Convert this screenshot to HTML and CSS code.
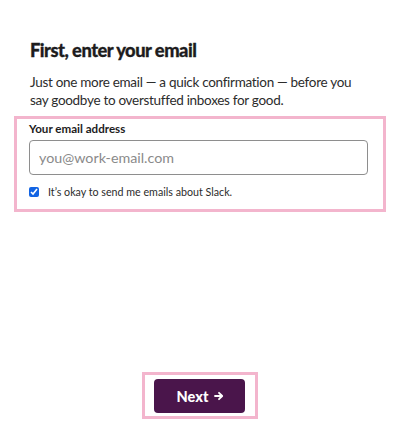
FILE: index.html
```html
<!DOCTYPE html>
<html>
<head>
<meta charset="utf-8">
<link rel="stylesheet" href="styles.css">
</head>
<body>
<main class="page">
  <h1 class="title">First, enter your email</h1>
  <p class="lead">Just one more email — a quick confirmation — before you say goodbye to overstuffed inboxes for good.</p>
  <section class="highlight form-box">
    <label class="label" for="email">Your email address</label>
    <input class="email" id="email" type="email" placeholder="you@work-email.com">
    <label class="consent">
      <input class="check" type="checkbox" checked>
      <span>It’s okay to send me emails about Slack.</span>
    </label>
  </section>
  <div class="actions">
    <div class="highlight btn-box">
      <button class="next" type="button">Next
        <svg class="arrow" width="10" height="10" viewBox="0 0 10 10"><path d="M1 5h7M5 1.8 8.2 5 5 8.2" fill="none" stroke="#fff" stroke-width="1.8" stroke-linecap="round" stroke-linejoin="round"/></svg>
      </button>
    </div>
  </div>
</main>
</body>
</html>
```

FILE: styles.css
```css
* { box-sizing: border-box; }
html, body { margin: 0; background: #fff; }
body {
  font-family: Lato, "Open Sans", sans-serif;
  color: #1d1c1d;
  width: 400px;
  height: 436px;
  overflow: hidden;
}
.page {
  padding: 38px 30px 0 30px;
  display: flex;
  flex-direction: column;
}
.title {
  margin: 0;
  font-size: 18.3px;
  line-height: 24px;
  font-weight: 900;
  letter-spacing: -0.5px;
  -webkit-text-stroke: 0.3px #1d1c1d;
}
.lead {
  margin: 12px 0 0 0;
  font-size: 13.5px;
  line-height: 17.5px;
  letter-spacing: -0.3px;
  color: #2c2c2c;
}
.highlight {
  border: 3px solid #f3b5cd;
}
.form-box {
  margin: 7px -16px 0 -16px;
  padding: 3px 14px 10px 12px;
  display: flex;
  flex-direction: column;
}
.label {
  font-size: 11.6px;
  font-weight: 700;
  line-height: 14px;
}
.email {
  margin-top: 4px;
  height: 35px;
  width: 339px;
  border: 1px solid #8e8e8e;
  border-radius: 4px;
  padding: 0 9px;
  font-family: Lato, sans-serif;
  font-size: 14.3px;
  color: #1d1c1d;
  outline: none;
}
.email::placeholder { color: #8a8a8a; }
.consent {
  margin-top: 10px;
  display: flex;
  align-items: center;
  gap: 9px;
  font-size: 10.7px;
  line-height: 14px;
  color: #2c2c2c;
}
.check {
  margin: 0;
  width: 10px;
  height: 10px;
  accent-color: #1264e3;
}
.actions {
  margin-top: 160px;
  display: flex;
  justify-content: center;
}
.btn-box {
  padding: 4px 10px 3px 9px;
}
.next {
  display: flex;
  align-items: center;
  justify-content: center;
  gap: 6px;
  width: 91px;
  height: 34px;
  border: none;
  border-radius: 4px;
  background: #4a154b;
  color: #fff;
  font-family: Lato, sans-serif;
  font-weight: 900;
  font-size: 14.5px;
  padding: 0 0 0 2px;
}
.arrow { display: block; }
```
